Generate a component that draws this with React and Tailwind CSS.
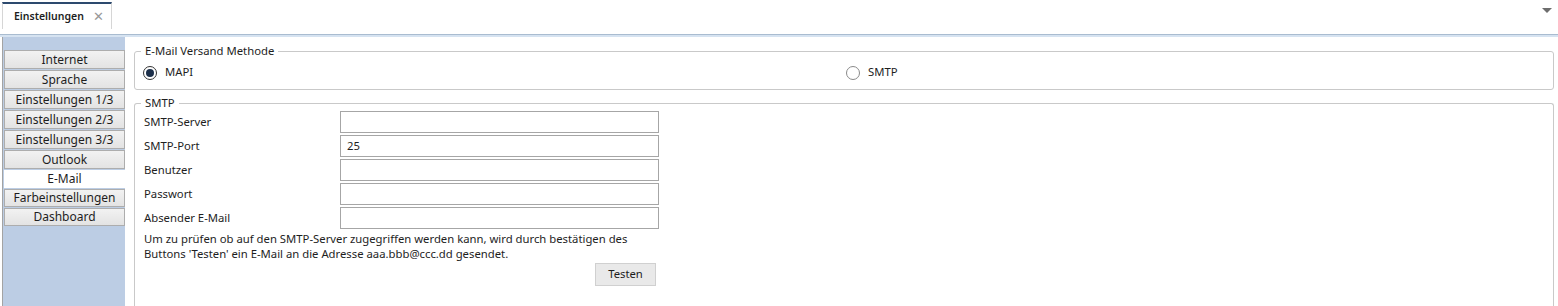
import React from 'react';

const menu = [
  'Internet',
  'Sprache',
  'Einstellungen 1/3',
  'Einstellungen 2/3',
  'Einstellungen 3/3',
  'Outlook',
  'E-Mail',
  'Farbeinstellungen',
  'Dashboard',
];

const fields = [
  { label: 'SMTP-Server', value: '' },
  { label: 'SMTP-Port', value: '25' },
  { label: 'Benutzer', value: '' },
  { label: 'Passwort', value: '' },
  { label: 'Absender E-Mail', value: '' },
];

const Radio = ({ checked, label }) => (
  <div className="flex items-center gap-[8px]">
    <span className={
      'w-[14px] h-[14px] rounded-full border flex items-center justify-center bg-white ' +
      (checked ? 'border-[#333333]' : 'border-[#8a8a8a]')
    }>
      {checked && <span className="w-[8px] h-[8px] rounded-full bg-[#1c2f4a]" />}
    </span>
    <span>{label}</span>
  </div>
);

const GroupBox = ({ title, className, children }) => (
  <div className={'relative border border-[#c9c9c9] rounded-[3px] ' + className}>
    <span className="absolute -top-[9px] left-[6px] bg-white px-[4px] leading-[16px]">{title}</span>
    {children}
  </div>
);

export default function App() {
  return (
    <div className="w-[1558px] h-[306px] bg-white text-[11.3px] text-[#1e1e1e] font-['Segoe_UI','Noto_Sans',sans-serif] flex flex-col overflow-hidden">
      <div className="h-[34px] flex items-start justify-between pl-[2px] pr-[6px]">
        <div className="mt-[2px] h-[27px] w-[110px] border-t-2 border-t-[#2d4a6e] border-x border-x-[#d6d6d6] flex items-center pl-[11px] gap-[9px]">
          <span className="font-semibold text-[10.5px]">Einstellungen</span>
          <span className="text-[#999999] text-[13px] leading-none">✕</span>
        </div>
        <div className="mt-[8px] w-0 h-0 border-x-[5px] border-x-transparent border-t-[5px] border-t-[#6d6d6d]" />
      </div>
      <div className="h-[3px] border-t border-[#a9bcd0] bg-[#d6e3f1]" />
      <div className="flex flex-1 min-h-0">
        <div className="w-[123px] ml-[2px] bg-[#bccde4] border-l border-[#a3a3a3] pt-[13px] pl-[1px] flex flex-col text-[12px]">
          {menu.map((m, i) => (
            <div
              key={m}
              className={
                'border flex items-center justify-center leading-none ' +
                (i < 6 ? 'h-[19px] mb-[1px] ' : 'h-[18px] mb-[1px] ') +
                (m === 'E-Mail'
                  ? 'bg-white border-white'
                  : 'bg-gradient-to-b from-[#f2f2f2] to-[#e3e3e3] border-[#adadad]')
              }
            >
              {m}
            </div>
          ))}
        </div>
        <div className="flex-1 pl-[9px] pr-[4px] pt-[14px] flex flex-col gap-[13px]">
          <GroupBox title="E-Mail Versand Methode" className="h-[39px] flex items-center pl-[8px] pt-[4px]">
            <div className="w-[703px]">
              <Radio checked label="MAPI" />
            </div>
            <Radio label="SMTP" />
          </GroupBox>
          <GroupBox title="SMTP" className="flex-1 border-b-0 rounded-b-none pl-[9px] pt-[7px]">
            <div className="flex flex-col gap-[2px]">
              {fields.map((f) => (
                <div key={f.label} className="flex items-center h-[22px]">
                  <span className="w-[196px]">{f.label}</span>
                  <div className="w-[319px] h-[22px] border border-[#a6a6a6] flex items-center px-[6px]">{f.value}</div>
                </div>
              ))}
            </div>
            <p className="mt-[2px] leading-[15px] w-[520px]">
              Um zu prüfen ob auf den SMTP-Server zugegriffen werden kann, wird durch bestätigen des
              <br />
              Buttons 'Testen' ein E-Mail an die Adresse aaa.bbb@ccc.dd gesendet.
            </p>
            <div className="w-[512px] flex justify-end mt-[2px]">
              <button className="w-[61px] h-[23px] bg-[#e9e9e9] border border-[#d0d0d0]">Testen</button>
            </div>
          </GroupBox>
        </div>
      </div>
    </div>
  );
}
